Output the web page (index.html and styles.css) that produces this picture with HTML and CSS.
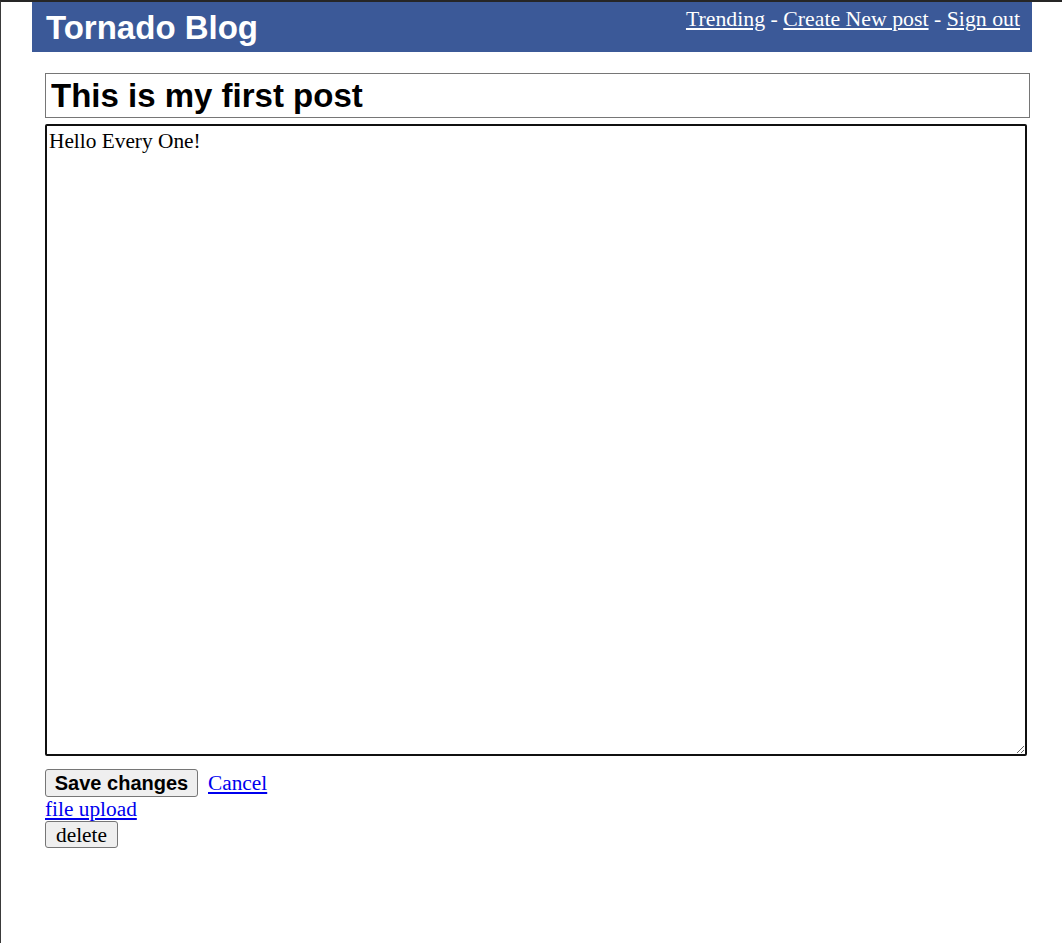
FILE: index.html
```html
<!DOCTYPE html>
<html>
<head>
<meta charset="utf-8">
<title>Tornado Blog</title>
<link rel="stylesheet" href="styles.css">
</head>
<body>
<div class="page">
  <div class="header">
    <h1 class="brand">Tornado Blog</h1>
    <div class="nav"><a href="#">Trending</a> - <a href="#">Create New post</a> - <a href="#">Sign out</a></div>
  </div>
  <form class="editor">
    <input class="title-input" type="text" value="This is my first post">
    <textarea class="body-input">Hello Every One!</textarea>
    <div class="actions">
      <button type="button" class="btn-save">Save changes</button>
      <a href="#" class="cancel">Cancel</a>
    </div>
    <div class="upload"><a href="#">file upload</a></div>
    <div class="del-row"><button type="button" class="btn-delete">delete</button></div>
  </form>
</div>
</body>
</html>
```

FILE: styles.css
```css
html, body {
  margin: 0;
  padding: 0;
}
body {
  border-top: 2px solid #262626;
  border-left: 1px solid #3a3a3a;
  min-height: 100vh;
  box-sizing: border-box;
  font-family: "Liberation Serif", "Times New Roman", serif;
  font-size: 21.33px;
  color: #000;
  background: #fff;
}
.page {
  width: 1000px;
  margin-left: 31px;
}
.header {
  background: #3b5998;
  height: 50px;
  box-sizing: border-box;
  padding: 5px 12px 0 14px;
  display: flex;
  justify-content: space-between;
  align-items: flex-start;
}
.brand {
  margin: 2px 0 0 0;
  font-family: "Liberation Sans", Arial, sans-serif;
  font-weight: bold;
  font-size: 33px;
  line-height: 37px;
  color: #fff;
}
.nav {
  color: #fff;
  font-size: 21.8px;
  line-height: 24px;
}
.nav a {
  color: #fff;
  text-decoration: underline;
}
.editor {
  padding-left: 13px;
  margin: 21px 0 0 0;
}
.title-input {
  display: block;
  box-sizing: border-box;
  width: 985px;
  height: 45px;
  margin: 0;
  border: 1px solid #767676;
  border-radius: 0;
  padding: 0 5px;
  font-family: "Liberation Sans", Arial, sans-serif;
  font-weight: bold;
  font-size: 33px;
  color: #000;
  background: #fff;
  outline: none;
}
.body-input {
  display: block;
  box-sizing: border-box;
  width: 982px;
  height: 632px;
  margin: 6px 0 0 0;
  border: 2px solid #101010;
  border-radius: 2px;
  padding: 3px 2px 2px 2px;
  font-family: "Liberation Serif", "Times New Roman", serif;
  font-size: 21.33px;
  line-height: 1.15;
  color: #000;
  background: #fff;
  outline: none;
  resize: both;
}
.actions {
  margin-top: 13px;
  height: 28px;
  display: flex;
  align-items: baseline;
  gap: 10px;
}
.btn-save {
  box-sizing: border-box;
  height: 28px;
  width: 153px;
  padding: 0 8px;
  margin: 0;
  border: 1px solid #767676;
  border-radius: 3px;
  background: #efefef;
  font-family: "Liberation Sans", Arial, sans-serif;
  font-weight: bold;
  font-size: 20px;
  color: #000;
}
.cancel, .upload a {
  color: #0000ee;
  text-decoration: underline;
}
.upload {
  line-height: 24px;
}
.del-row {
  height: 27px;
}
.btn-delete {
  box-sizing: border-box;
  height: 27px;
  width: 73px;
  padding: 0 6px;
  margin: 0;
  border: 1px solid #767676;
  border-radius: 3px;
  background: #efefef;
  font-family: "Liberation Serif", "Times New Roman", serif;
  font-size: 21.33px;
  line-height: 24px;
  color: #000;
}
```
